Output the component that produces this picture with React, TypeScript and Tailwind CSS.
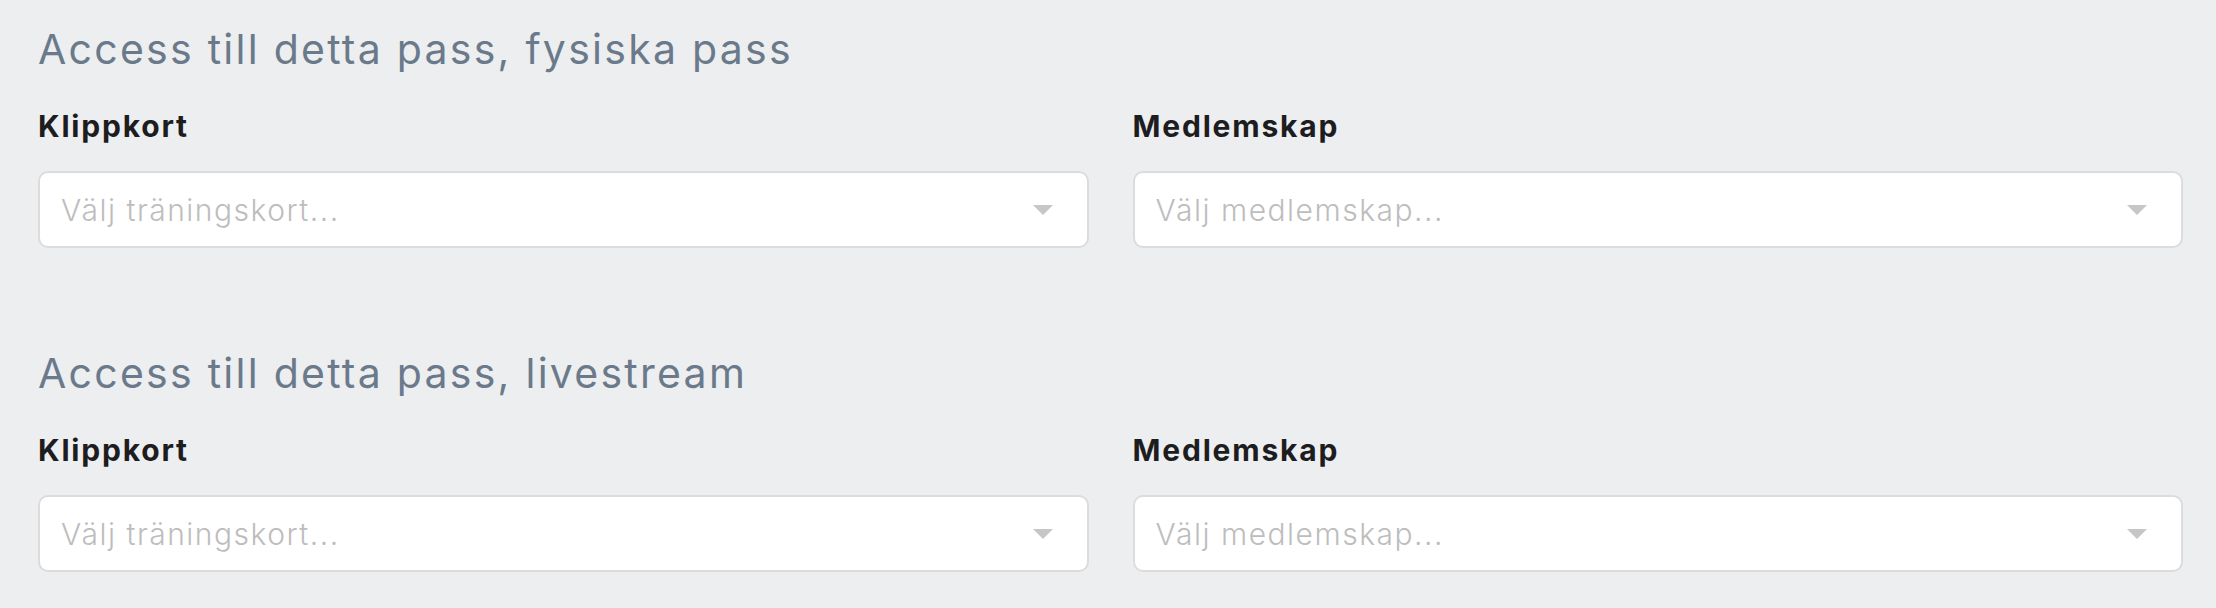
import { useState } from 'react';

type Option = { value: string; label: string };

function Select({ placeholder }: { placeholder: string; options?: Option[] }) {
  const [value] = useState('');
  return (
    <div className="flex h-[77px] items-center justify-between rounded-[10px] border-2 border-[#dcdcdc] bg-white pl-[21px] pr-[34px]">
      <span className="text-[30px] leading-[36px] font-light tracking-[0.05em] text-[#bdbdbd]">
        {value || placeholder}
      </span>
      <svg width="20" height="10" viewBox="0 0 20 10" className="shrink-0">
        <path d="M0 0h20L10 10z" fill="#c6c6c6" />
      </svg>
    </div>
  );
}

function AccessSection({ title }: { title: string }) {
  return (
    <section>
      <h2 className="text-[41px] leading-[48px] font-normal tracking-[0.055em] text-[#6b7a8b]">{title}</h2>

      {/* two selects side by side */}
      <div className="mt-[35px] grid grid-cols-2 gap-x-[44px]">
        <div>
          <label className="block text-[30px] leading-[36px] font-bold tracking-[0.06em] text-[#1d1d1f]">Klippkort</label>
          <div className="mt-[27px]">
            <Select placeholder="Välj träningskort..." />
          </div>
        </div>
        <div>
          <label className="block text-[30px] leading-[36px] font-bold tracking-[0.06em] text-[#1d1d1f]">Medlemskap</label>
          <div className="mt-[27px]">
            <Select placeholder="Välj medlemskap..." />
          </div>
        </div>
      </div>
    </section>
  );
}

export default function App() {
  return (
    <div className="min-h-screen bg-[#edeef0] pl-[38px] pr-[33px] pt-[25px] font-['Inter',sans-serif]">
      <AccessSection title="Access till detta pass, fysiska pass" />
      <div className="mt-[101px]">
        <AccessSection title="Access till detta pass, livestream" />
      </div>
    </div>
  );
}
